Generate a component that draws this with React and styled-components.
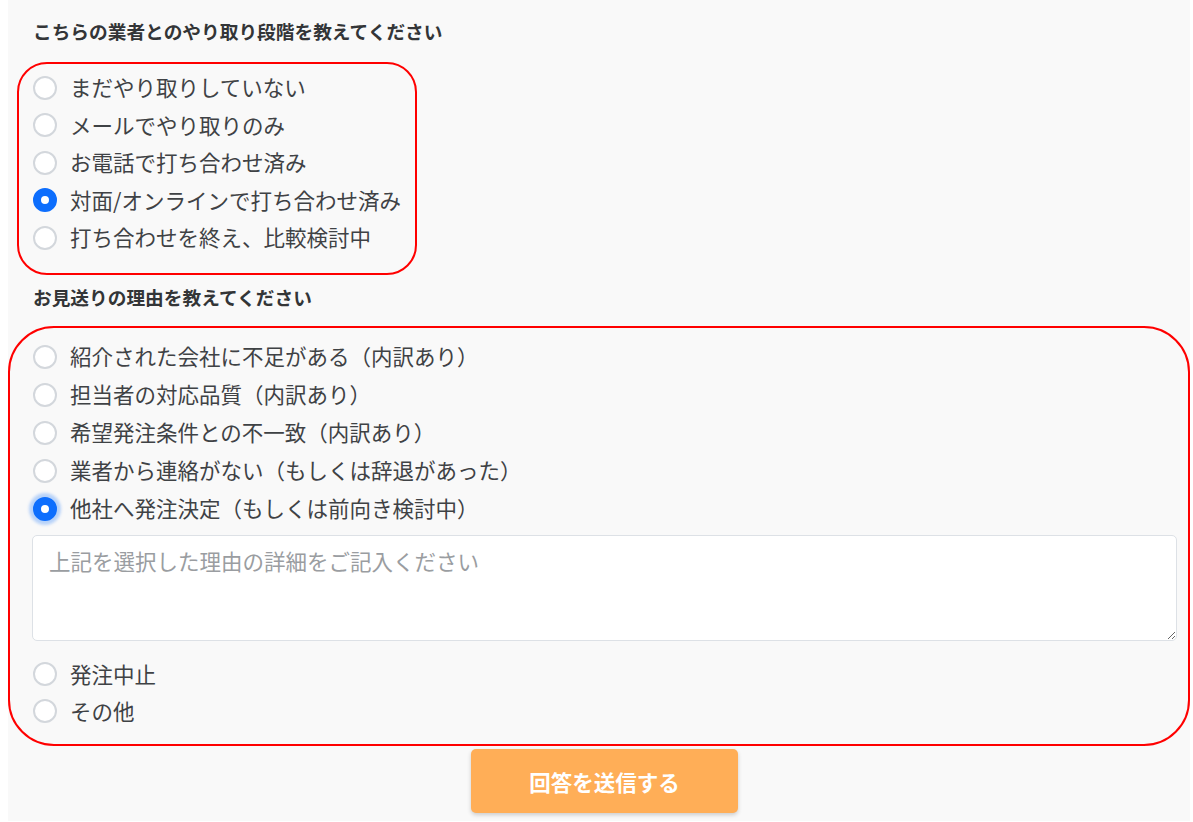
import React from "react";
import styled, { createGlobalStyle } from "styled-components";

const Global = createGlobalStyle`
  html, body { margin: 0; padding: 0; background: #ffffff; }
  body { font-family: "Noto Sans CJK JP", "Noto Sans", sans-serif; }
`;

const Panel = styled.div`
  margin-left: 8px;
  width: 1182px;
  min-height: 820px;
  background: #f9f9f9;
  padding-top: 18px;
  box-sizing: border-box;
`;

const Title = styled.div`
  padding-left: 25px;
  margin-top: ${(p) => p.$mt || 0}px;
  font-size: 18.7px;
  line-height: 26px;
  font-weight: 700;
  color: #333537;
`;

const Box = styled.div`
  box-sizing: border-box;
  width: ${(p) => p.$w}px;
  margin-left: ${(p) => p.$ml}px;
  margin-top: ${(p) => p.$mt}px;
  border: 2.5px solid #ff0000;
  border-radius: ${(p) => p.$r}px;
  padding: ${(p) => p.$pad};
  display: flex;
  flex-direction: column;
`;

const Row = styled.label`
  display: flex;
  align-items: center;
  gap: 13px;
  height: ${(p) => p.$h || 37.5}px;
  font-size: 21.5px;
  color: #3f4245;
  cursor: pointer;
`;

const Radio = styled.input.attrs({ type: "radio" })`
  appearance: none;
  margin: 0 0 0 -1px;
  flex: 0 0 auto;
  width: 24px;
  height: 24px;
  border-radius: 50%;
  border: 2px solid #d3d7dc;
  background: #fff;
  box-sizing: border-box;
  position: relative;
  top: 1px;
  box-shadow: ${(p) => (p.$focus ? "0 0 3px 4px rgba(13,110,253,0.28)" : "none")};
  &:checked {
    border: 8px solid #0d6efd;
    background: #fff;
  }
`;

const Area = styled.textarea`
  box-sizing: border-box;
  display: block;
  width: 1145px;
  height: 106px;
  margin: 8px 0 14px -2px;
  padding: 9px 16px;
  border: 1.5px solid #dde1e6;
  border-radius: 5px;
  background: #fff;
  font-family: "Noto Sans CJK JP", sans-serif;
  font-size: 21.5px;
  color: #333;
  resize: both;
  outline: none;
  &::placeholder { color: #9a9da1; }
`;

const ButtonWrap = styled.div`
  display: flex;
  justify-content: center;
  padding-left: 11px;
  margin-top: 3px;
  padding-bottom: 8px;
`;

const Submit = styled.button`
  width: 267px;
  height: 64px;
  border: none;
  border-radius: 5px;
  background: #ffae57;
  color: #fff;
  font-family: "Noto Sans CJK JP", sans-serif;
  font-size: 21.5px;
  font-weight: 700;
  box-shadow: 0 2px 4px rgba(0, 0, 0, 0.18);
  cursor: pointer;
`;

const stage = [
  "まだやり取りしていない",
  "メールでやり取りのみ",
  "お電話で打ち合わせ済み",
  "対面/オンラインで打ち合わせ済み",
  "打ち合わせを終え、比較検討中",
];

const reasons = [
  "紹介された会社に不足がある（内訳あり）",
  "担当者の対応品質（内訳あり）",
  "希望発注条件との不一致（内訳あり）",
  "業者から連絡がない（もしくは辞退があった）",
  "他社へ発注決定（もしくは前向き検討中）",
];

export default function App() {
  return (
    <>
      <Global />
      <Panel>
        <Title>こちらの業者とのやり取り段階を教えてください</Title>
        <Box $w={400} $ml={9} $mt={18} $r={30} $pad="4px 10px 17.5px 15px">
          {stage.map((s, i) => (
            <Row key={s}>
              <Radio name="stage" defaultChecked={i === 3} />
              {s}
            </Row>
          ))}
        </Box>
        <Title $mt={9}>お見送りの理由を教えてください</Title>
        <Box $w={1182} $ml={0} $mt={16} $r={46} $pad="8.5px 11px 15.5px 24px">
          {reasons.map((s, i) => (
            <Row key={s} $h={38}>
              <Radio name="reason" defaultChecked={i === 4} $focus={i === 4} />
              {s}
            </Row>
          ))}
          <Area placeholder="上記を選択した理由の詳細をご記入ください" />
          <Row $h={37}>
            <Radio name="reason" />
            発注中止
          </Row>
          <Row $h={37}>
            <Radio name="reason" />
            その他
          </Row>
        </Box>
        <ButtonWrap>
          <Submit>回答を送信する</Submit>
        </ButtonWrap>
      </Panel>
    </>
  );
}
